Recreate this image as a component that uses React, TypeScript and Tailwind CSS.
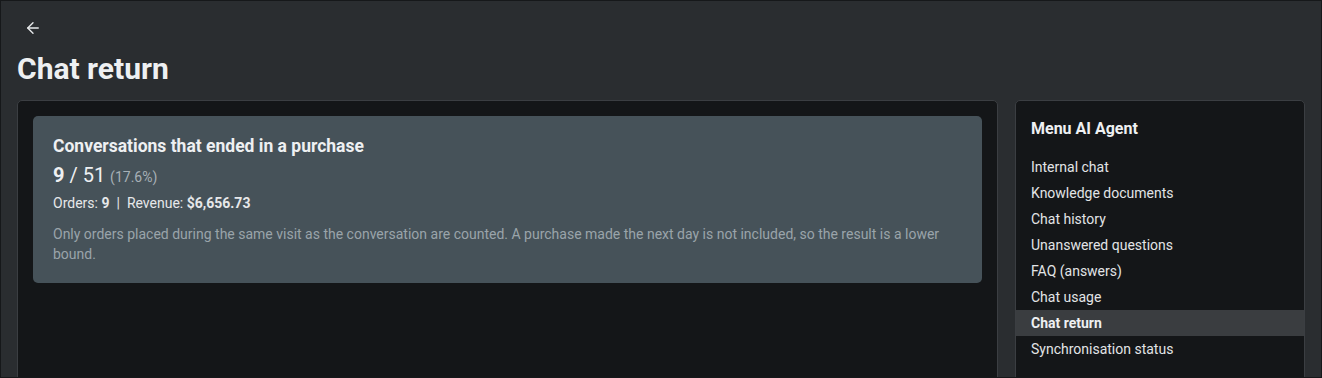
import React, { FC } from "react";

const menu = [
  "Internal chat",
  "Knowledge documents",
  "Chat history",
  "Unanswered questions",
  "FAQ (answers)",
  "Chat usage",
  "Chat return",
  "Synchronisation status",
];

const App: FC = () => {
  return (
    <div
      className="h-[378px] w-full overflow-hidden border border-[#16181a] bg-[#2a2d30] text-[#e6e8ea]"
      style={{ fontFamily: "Roboto, 'Liberation Sans', sans-serif" }}
    >
      <div className="px-4 pt-[17px]">
        <button className="ml-[6px] flex h-5 w-5 items-center justify-center text-[#e8eaec]">
          <svg width="18" height="18" viewBox="0 0 24 24" fill="none" stroke="currentColor" strokeWidth="1.8" strokeLinecap="round" strokeLinejoin="round">
            <path d="M19 12H5" />
            <path d="M12 19l-7-7 7-7" />
          </svg>
        </button>
        <h1 className="mt-[12px] text-[30px] font-bold leading-[38px] text-[#eef0f2]">Chat return</h1>
      </div>

      <div className="mt-[12px] flex gap-[17px] px-4">
        {/* main panel */}
        <div className="h-[300px] flex-1 rounded-[5px] border border-[#3b3e42] bg-[#141618] p-[15px]">
          <div className="rounded-[5px] bg-[#465259] px-5 pt-[18px] pb-[19px]">
            <p className="text-[17.5px] font-bold leading-[24px] text-[#eef0f2]">
              Conversations that ended in a purchase
            </p>
            <p className="mt-[4px] text-[20px] leading-[26px] text-[#eef0f2]">
              <span className="font-bold">9</span> / 51{" "}
              <span className="text-[14px] text-[#a7b0b6]">(17.6%)</span>
            </p>
            <p className="mt-[3px] text-[14px] leading-[20px] text-[#e6e8ea]">
              Orders: <span className="font-bold">9</span>
              <span className="mx-[7px]">|</span>
              Revenue: <span className="font-bold">$6,656.73</span>
            </p>
            <p className="mt-[11px] text-[14px] leading-[20px] text-[#9aa4aa]">
              Only orders placed during the same visit as the conversation are counted. A purchase made the next day is not included, so the result is a lower bound.
            </p>
          </div>
        </div>

        {/* sidebar */}
        <div className="h-[300px] w-[290px] rounded-[5px] border border-[#3b3e42] bg-[#141618] pt-[17px]">
          <p className="px-[15px] text-[16px] font-bold leading-[22px] text-[#eef0f2]">Menu AI Agent</p>
          <ul className="mt-[14px]">
            {menu.map((m) => (
              <li
                key={m}
                className={
                  m === "Chat return"
                    ? "bg-[#3a3d40] px-[15px] text-[14px] font-bold leading-[26px] text-[#eef0f2]"
                    : "px-[15px] text-[14px] leading-[26px] text-[#e2e4e6]"
                }
              >
                {m}
              </li>
            ))}
          </ul>
        </div>
      </div>
    </div>
  );
};

export default App;
